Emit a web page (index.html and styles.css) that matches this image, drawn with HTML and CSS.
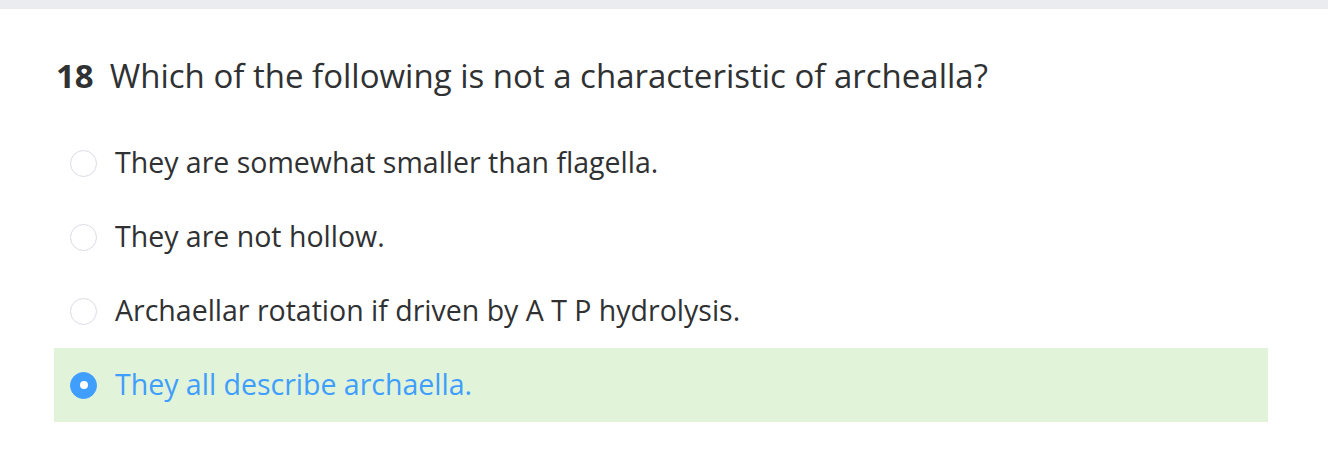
FILE: index.html
```html
<!DOCTYPE html>
<html>
<head>
<meta charset="utf-8">
<link rel="stylesheet" href="styles.css">
</head>
<body>
<div class="topbar"></div>
<div class="card">
  <div class="question"><span class="num">18</span><span class="qtext">Which of the following is not a characteristic of archealla?</span></div>
  <div class="options">
    <div class="option"><span class="radio"></span><span class="label">They are somewhat smaller than flagella.</span></div>
    <div class="option"><span class="radio"></span><span class="label">They are not hollow.</span></div>
    <div class="option"><span class="radio"></span><span class="label">Archaellar rotation if driven by A T P hydrolysis.</span></div>
    <div class="option selected"><span class="radio"></span><span class="label">They all describe archaella.</span></div>
  </div>
</div>
</body>
</html>
```
FILE: styles.css
```css
html, body { margin: 0; padding: 0; background: #fff; }
body { font-family: "Open Sans", "Noto Sans", sans-serif; color: #303133; }
.topbar { height: 9px; background: #eaecef; }
.card { padding: 45px 60px 0 54px; }
.question { display: flex; align-items: baseline; font-size: 33px; line-height: 44px; padding-left: 2px; }
.num { font-weight: 700; margin-right: 16px; }
.options { margin-top: 28px; display: flex; flex-direction: column; gap: 0; }
.option { display: flex; align-items: center; height: 74px; padding-left: 16px; font-size: 28.5px; }
.option .label { position: relative; top: -1px; }
.radio { width: 27px; height: 27px; border: 1.5px solid #d9dce3; border-radius: 50%; box-sizing: border-box; margin-right: 18px; flex: none; display: flex; align-items: center; justify-content: center; }
.option.selected { background: #e1f3d8; color: #409eff; }
.option.selected .radio { background: #409eff; border-color: #409eff; }
.option.selected .radio::after { content: ""; width: 8px; height: 8px; border-radius: 50%; background: #fff; }
```
